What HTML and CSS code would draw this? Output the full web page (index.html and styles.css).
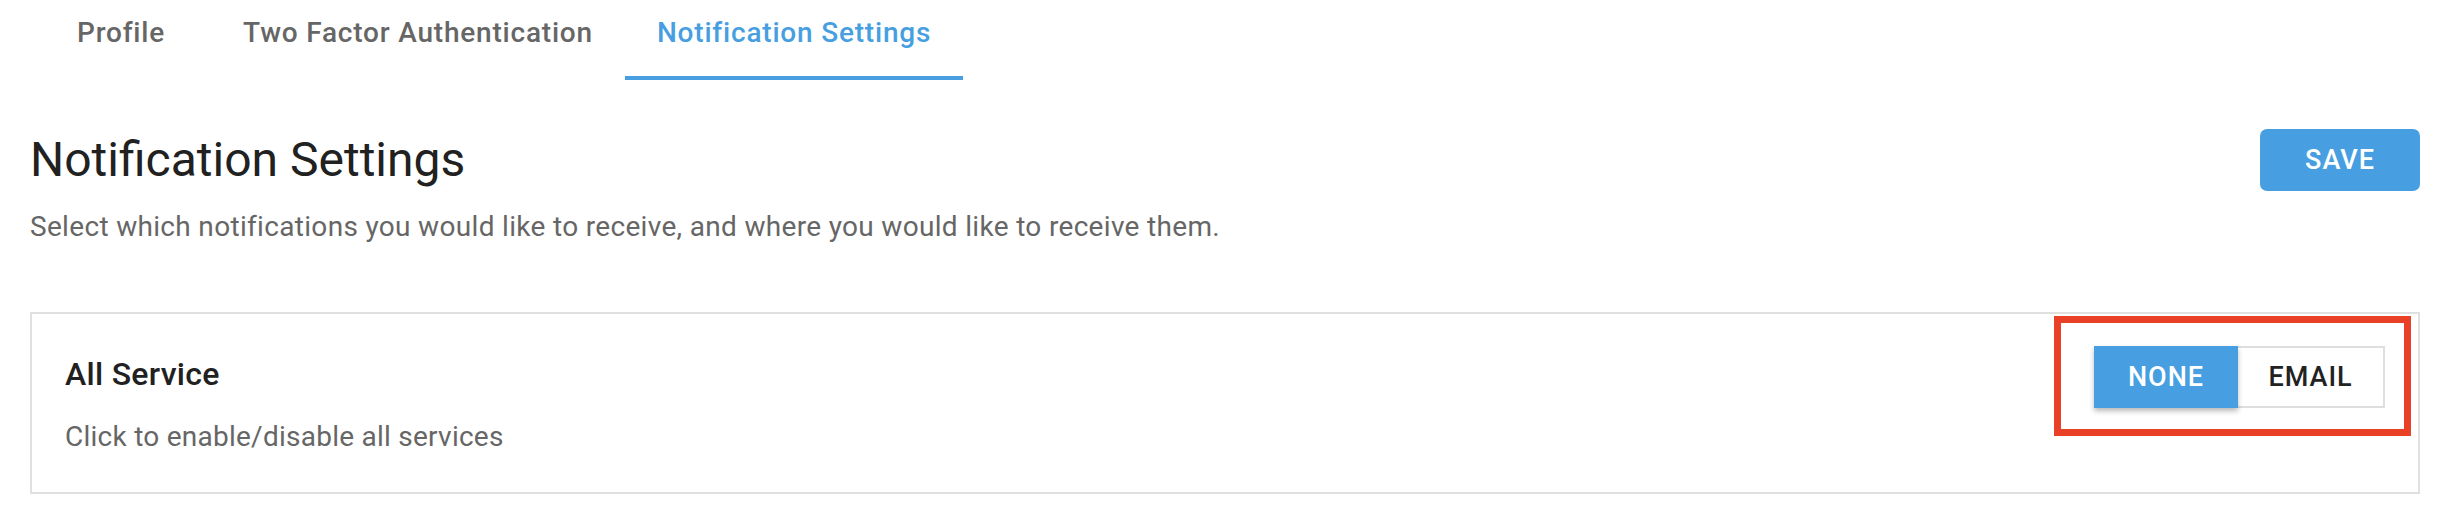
FILE: index.html
```html
<!DOCTYPE html>
<html lang="en">
<head>
<meta charset="utf-8">
<title>Notification Settings</title>
<link rel="stylesheet" href="styles.css">
</head>
<body>
<div class="page">
  <nav class="tabs">
    <a class="tab">Profile</a>
    <a class="tab">Two Factor Authentication</a>
    <a class="tab tab-active">Notification Settings</a>
  </nav>

  <div class="head-row">
    <h1 class="title">Notification Settings</h1>
    <button class="btn-save">SAVE</button>
  </div>
  <p class="intro">Select which notifications you would like to receive, and where you would like to receive them.</p>

  <div class="card">
    <div class="card-text">
      <div class="card-title">All Service</div>
      <div class="card-desc">Click to enable/disable all services</div>
    </div>
    <div class="toggle">
      <button class="seg seg-none">NONE</button>
      <button class="seg seg-email">EMAIL</button>
      <span class="highlight"></span>
    </div>
  </div>
</div>
</body>
</html>
```

FILE: styles.css
```css
* { box-sizing: border-box; }

html, body {
  margin: 0;
  padding: 0;
  background: #ffffff;
}

body {
  font-family: Roboto, "Liberation Sans", Arial, sans-serif;
  color: #212121;
  overflow: hidden;
}

.page {
  padding: 0 36px 0 30px;
}

.tabs {
  display: flex;
  height: 96px;
  margin-top: -16px;
  padding-left: 1px;
}

.tab {
  position: relative;
  display: flex;
  align-items: center;
  justify-content: center;
  min-width: 180px;
  padding: 0 32px;
  font-size: 28px;
  font-weight: 500;
  letter-spacing: 0.8px;
  color: #666666;
  cursor: pointer;
}

.tab-active {
  color: #479fe1;
}

.tab-active::after {
  content: "";
  position: absolute;
  left: 0;
  right: 0;
  bottom: 0;
  height: 4px;
  background: #479fe1;
}

.head-row {
  display: flex;
  align-items: center;
  justify-content: space-between;
  margin-top: 48px;
  height: 64px;
}

.title {
  margin: 0;
  font-size: 48px;
  line-height: 64px;
  font-weight: 400;
  color: #212121;
}

.btn-save {
  width: 160px;
  height: 62px;
  border: none;
  border-radius: 7px;
  background: #479fe1;
  color: #ffffff;
  font-family: inherit;
  font-size: 27px;
  font-weight: 500;
  letter-spacing: 1px;
  padding: 0;
  cursor: pointer;
}

.intro {
  margin: 15px 0 0;
  font-size: 28px;
  line-height: 40px;
  letter-spacing: 0.32px;
  color: #666666;
}

.card {
  display: flex;
  justify-content: space-between;
  align-items: flex-start;
  margin-top: 65px;
  border: 2px solid #e0e0e0;
  padding: 32px 33px 35px 33px;
}

.card-text {
  padding-top: 4px;
}

.card-title {
  font-size: 32px;
  line-height: 48px;
  font-weight: 500;
  letter-spacing: 0.3px;
  color: #212121;
}

.card-desc {
  margin-top: 19px;
  font-size: 28px;
  line-height: 40px;
  letter-spacing: 0.25px;
  color: #666666;
}

.toggle {
  position: relative;
  display: flex;
  height: 62px;
}

.seg {
  height: 62px;
  padding: 0;
  font-family: inherit;
  font-size: 27px;
  font-weight: 500;
  letter-spacing: 1px;
  cursor: pointer;
}

.seg-none {
  width: 144px;
  border: none;
  background: #479fe1;
  color: #ffffff;
  box-shadow: 0 3px 5px rgba(0, 0, 0, 0.28);
  position: relative;
  z-index: 1;
}

.seg-email {
  width: 147px;
  border: 2px solid #dedede;
  border-left: none;
  background: #ffffff;
  color: #222222;
}

.highlight {
  position: absolute;
  top: -30px;
  left: -40px;
  right: -26px;
  bottom: -28px;
  border: 7px solid #e84127;
  pointer-events: none;
}
```
